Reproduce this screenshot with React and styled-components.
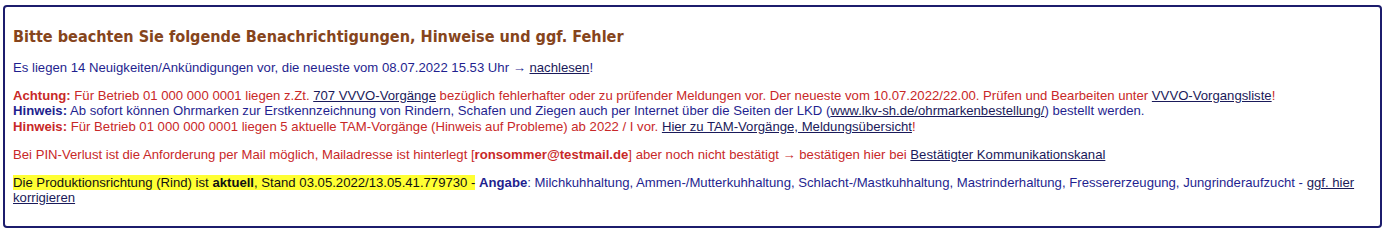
import styled, { createGlobalStyle } from "styled-components";

const GlobalStyle = createGlobalStyle`
  body {
    margin: 0;
    background: #ffffff;
    font-family: "Liberation Sans", Arial, sans-serif;
  }
`;

const Panel = styled.div`
  margin: 5px 3px 0 3px;
  border: 2px solid #1c1c6c;
  border-radius: 4px;
  padding: 0 8px 8px 8px;
`;

const Title = styled.h3`
  font-family: "DejaVu Sans Condensed", "DejaVu Sans", sans-serif;
  font-size: 16.1px;
  font-weight: bold;
  line-height: 20px;
  color: #86451c;
  margin: 20px 0 13px 0;
`;

const Para = styled.p`
  font-size: 13.15px;
  line-height: 15.5px;
  margin: 12.4px 0;
  color: ${(props) => props.color || "#1f1f8f"};
  &:last-child {
    margin-bottom: 12px;
  }
`;

const Line = styled.div`
  color: ${(props) => props.color};
`;

const Label = styled.b`
  color: ${(props) => props.color || "inherit"};
`;

const Link = styled.a`
  color: #1a1a5a;
  text-decoration: underline;
  cursor: pointer;
`;

const Mark = styled.span`
  background: #ffff33;
  color: #111111;
`;

const RED = "#c82828";
const BLUE = "#1f1f8f";

export default function App() {
  return (
    <>
      <GlobalStyle />
      <Panel>
        <Title>Bitte beachten Sie folgende Benachrichtigungen, Hinweise und ggf. Fehler</Title>

        <Para>
          Es liegen 14 Neuigkeiten/Ankündigungen vor, die neueste vom 08.07.2022 15.53 Uhr →{" "}
          <Link>nachlesen</Link>!
        </Para>

        <Para>
          <Line color={RED}>
            <Label>Achtung:</Label> Für Betrieb 01 000 000 0001 liegen z.Zt. <Link>707 VVVO-Vorgänge</Link>{" "}
            bezüglich fehlerhafter oder zu prüfender Meldungen vor. Der neueste vom 10.07.2022/22.00. Prüfen und
            Bearbeiten unter <Link>VVVO-Vorgangsliste</Link>!
          </Line>
          <Line color={BLUE}>
            <Label>Hinweis:</Label> Ab sofort können Ohrmarken zur Erstkennzeichnung von Rindern, Schafen und Ziegen
            auch per Internet über die Seiten der LKD (<Link>www.lkv-sh.de/ohrmarkenbestellung/</Link>) bestellt
            werden.
          </Line>
          <Line color={RED}>
            <Label>Hinweis:</Label> Für Betrieb 01 000 000 0001 liegen 5 aktuelle TAM-Vorgänge (Hinweis auf Probleme)
            ab 2022 / I vor. <Link>Hier zu TAM-Vorgänge, Meldungsübersicht</Link>!
          </Line>
        </Para>

        <Para color={RED}>
          Bei PIN-Verlust ist die Anforderung per Mail möglich, Mailadresse ist hinterlegt [
          <Label>ronsommer@testmail.de</Label>] aber noch nicht bestätigt → bestätigen hier bei{" "}
          <Link>Bestätigter Kommunikationskanal</Link>
        </Para>

        <Para>
          <Mark>
            Die Produktionsrichtung (Rind) ist <b>aktuell</b>, Stand 03.05.2022/13.05.41.779730 -
          </Mark>{" "}
          <Label color={BLUE}>Angabe</Label>: Milchkuhhaltung, Ammen-/Mutterkuhhaltung, Schlacht-/Mastkuhhaltung,
          Mastrinderhaltung, Fressererzeugung, Jungrinderaufzucht - <Link>ggf. hier korrigieren</Link>
        </Para>
      </Panel>
    </>
  );
}
